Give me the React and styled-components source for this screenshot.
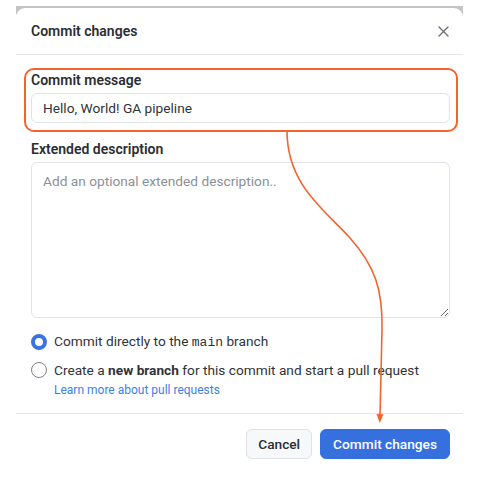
import React from "react";
import styled, { createGlobalStyle } from "styled-components";

const Global = createGlobalStyle`
  html, body { margin: 0; padding: 0; background: #ffffff; }
  body { font-family: Roboto, "Liberation Sans", Arial, sans-serif; color: #1f2328; }
  #root { position: relative; width: 492px; height: 482px; overflow: hidden; }
`;

const Frame = styled.div`
  margin: 6px 0 0 16px;
  width: 447px;
  background: #c4c4c4;
  padding-top: 2px;
`;

const Dialog = styled.div`
  background: #ffffff;
  border-radius: 9px 9px 0 0;
`;

const Header = styled.div`
  height: 46px;
  display: flex;
  align-items: center;
  justify-content: space-between;
  padding: 0 15px 0 15px;
  border-bottom: 1px solid #e4e6e9;
`;

const Title = styled.h2`
  margin: 0;
  font-size: 14px;
  font-weight: 600;
  color: #2a2e33;
`;

const Close = styled.button`
  border: 0;
  background: transparent;
  padding: 0;
  width: 20px;
  height: 20px;
  display: flex;
  align-items: center;
  justify-content: center;
  margin-right: -5px;
`;

const Body = styled.div`
  padding: 13px 13px 0 8px;
`;

const Highlight = styled.div`
  border: 2px solid #f3642c;
  border-radius: 10px;
  padding: 1px 6px 7px 5px;
  margin-right: -8px;
`;

const Label = styled.div`
  font-size: 14px;
  line-height: 18px;
  font-weight: 600;
  color: #2a2e33;
  margin-top: ${(p) => p.$mt || 0}px;
  padding-left: ${(p) => p.$pl || 0}px;
`;

const Input = styled.input`
  box-sizing: border-box;
  display: block;
  width: 100%;
  height: 30px;
  margin-top: 4px;
  border: 1px solid #dfe2e6;
  border-radius: 6px;
  padding: 0 11px;
  font-family: inherit;
  font-size: 13.7px;
  color: #2f3338;
  background: #fff;
  outline: none;
`;

const TextArea = styled.textarea`
  box-sizing: border-box;
  display: block;
  width: 419px;
  height: 156px;
  margin: 4px 0 0 7px;
  border: 1px solid #dfe2e6;
  border-radius: 6px;
  padding: 10px 11px;
  font-family: inherit;
  font-size: 13.7px;
  resize: vertical;
  outline: none;
  &::placeholder { color: #8b9098; }
`;

const Options = styled.div`
  margin: 13px 0 0 7px;
  display: flex;
  flex-direction: column;
  gap: 7px;
`;

const Option = styled.label`
  display: flex;
  align-items: center;
  gap: 7px;
  font-size: 13.7px;
  line-height: 20px;
  color: #2f3338;
`;

const Radio = styled.span`
  box-sizing: border-box;
  width: 16px;
  height: 16px;
  border-radius: 50%;
  flex: none;
  border: ${(p) => (p.$checked ? "4.5px solid #3a73e0" : "1px solid #7d838b")};
  background: #fff;
`;

const Mono = styled.code`
  font-family: "Liberation Mono", "DejaVu Sans Mono", monospace;
  font-size: 13px;
`;

const Link = styled.a`
  display: block;
  margin: -5px 0 0 23px;
  font-size: 12px;
  line-height: 16px;
  color: #3d7fe6;
  text-decoration: none;
`;

const Footer = styled.div`
  margin-top: 15px;
  border-top: 1px solid #e4e6e9;
  padding: 15px 13px 11px 0;
  display: flex;
  justify-content: flex-end;
  gap: 8px;
`;

const Button = styled.button`
  height: 30px;
  border-radius: 6px;
  padding: 0 ${(p) => (p.$primary ? 12 : 11)}px;
  font-family: inherit;
  font-size: 13.7px;
  font-weight: 500;
  border: 1px solid ${(p) => (p.$primary ? "#3570de" : "#dfe2e6")};
  background: ${(p) => (p.$primary ? "#3570de" : "#f6f8fa")};
  color: ${(p) => (p.$primary ? "#ffffff" : "#2a2e33")};
`;

const Overlay = styled.svg`
  position: absolute;
  left: 0;
  top: 0;
  pointer-events: none;
`;

export default function App() {
  return (
    <>
      <Global />
      <Frame>
        <Dialog>
          <Header>
            <Title>Commit changes</Title>
            <Close aria-label="Close">
              <svg width="11" height="11" viewBox="0 0 11 11">
                <path d="M1 1L10 10M10 1L1 10" stroke="#6b7079" strokeWidth="1.4" strokeLinecap="round" />
              </svg>
            </Close>
          </Header>
          <Body>
            <Highlight>
              <Label>Commit message</Label>
              <Input defaultValue="Hello, World! GA pipeline" />
            </Highlight>
            <Label $mt={8} $pl={7}>Extended description</Label>
            <TextArea placeholder="Add an optional extended description.." />
            <Options>
              <Option>
                <Radio $checked />
                <span>
                  Commit directly to the <Mono>main</Mono> branch
                </span>
              </Option>
              <Option>
                <Radio />
                <span>
                  Create a <b>new branch</b> for this commit and start a pull request
                </span>
              </Option>
              <Link href="#">Learn more about pull requests</Link>
            </Options>
          </Body>
          <Footer>
            <Button>Cancel</Button>
            <Button $primary>Commit changes</Button>
          </Footer>
        </Dialog>
      </Frame>
      <Overlay width="492" height="482" viewBox="0 0 492 482">
        <path
          d="M287 131 C 287 185, 325 210, 350 238 C 375 266, 383 290, 382 330 L 380 416"
          fill="none"
          stroke="#f3642c"
          strokeWidth="1.6"
        />
        <path d="M376.5 414 L383.5 414.3 L379.8 423 Z" fill="#f3642c" />
      </Overlay>
    </>
  );
}
